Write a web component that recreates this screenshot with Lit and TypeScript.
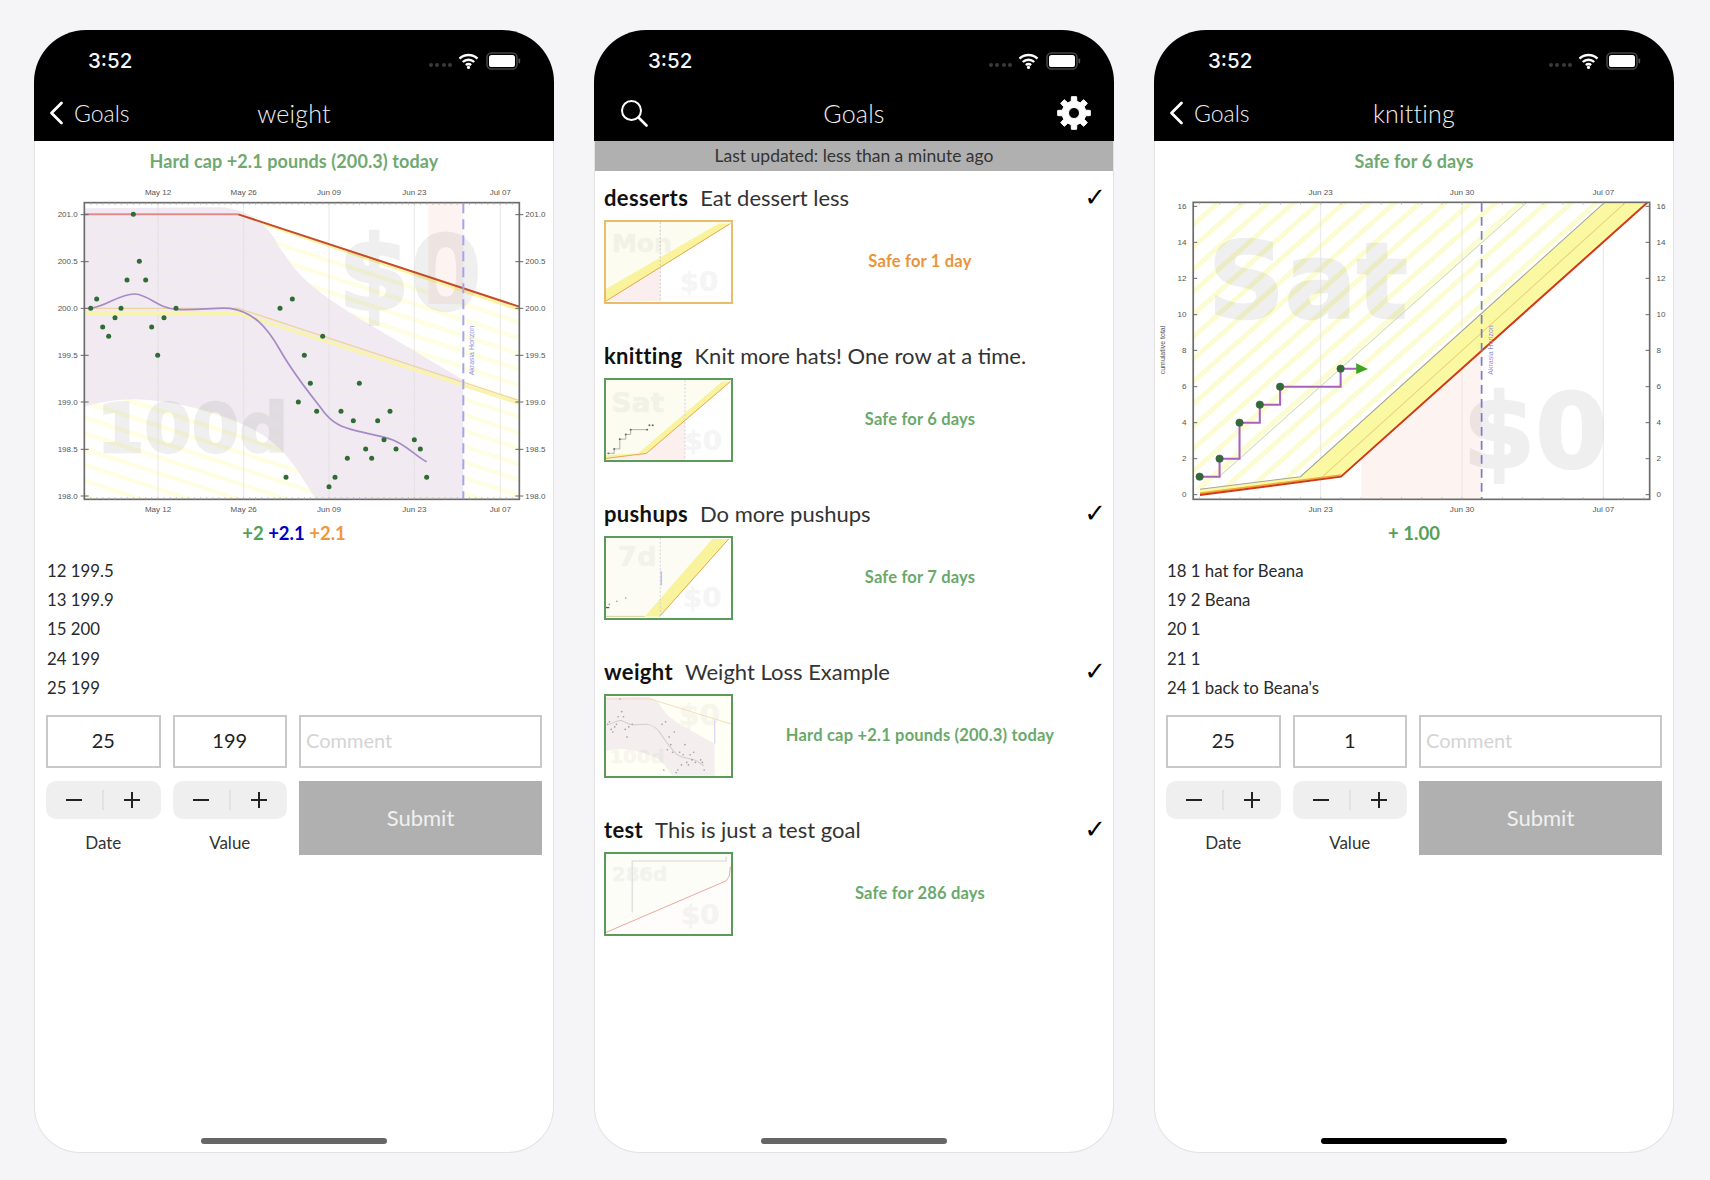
import { LitElement, html, svg, css } from "lit";
import { customElement } from "lit/decorators.js";

const pts1: [number, number][] = [[152,385],[170,357],[188,441],[206,469],[225,413],[243,385],[261,300],[280,103],[298,244],[317,300],[335,441],[353,526],[372,413],[408,385],[720,385],[738,892],[757,357],[775,666],[793,526],[811,610],[830,694],[848,469],[867,920],[885,892],[903,694],[922,835],[940,722],[958,610],[977,807],[995,835],[1013,722],[1032,779],[1050,694],[1068,807],[1123,779],[1141,807],[1160,892]];
const purple1 = "M150,385 C200,380 240,340 285,342 C330,345 350,385 410,388 C470,392 520,382 570,385 C640,395 680,440 720,510 C760,580 800,630 840,680 C880,740 920,745 960,755 C1020,770 1040,770 1070,785 C1110,805 1130,830 1160,845";
const pinkRegion1 = "M135,85 L540,82 C600,85 660,110 700,170 C740,240 780,290 820,320 C880,370 950,410 1000,440 L1270,600 L1270,955 L825,955 C780,880 740,810 660,760 C560,700 400,660 280,658 C220,658 170,670 135,680 Z";

function gearPath(cx: number, cy: number, ro: number, ri: number, hole: number, teeth = 8) {
  let d = "";
  const step = (Math.PI * 2) / teeth;
  for (let i = 0; i < teeth; i++) {
    const a = i * step - Math.PI / 2;
    const w = step * 0.2;
    const p = (r: number, t: number) => `${(cx + r * Math.cos(t)).toFixed(2)},${(cy + r * Math.sin(t)).toFixed(2)}`;
    d += `${i === 0 ? "M" : "L"}${p(ri, a - step * 0.3)} L${p(ro, a - w)} L${p(ro, a + w)} L${p(ri, a + step * 0.3)} `;
  }
  d += "Z ";
  d += `M${cx + hole},${cy} A${hole},${hole} 0 1 0 ${cx - hole},${cy} A${hole},${hole} 0 1 0 ${cx + hole},${cy} Z`;
  return d;
}

function range(from: number, to: number, step: number) {
  const a: number[] = [];
  for (let v = from; v <= to; v += step) a.push(v);
  return a;
}

function chartWeight() {
  const xt: [number, string][] = [[354,"May 12"],[611,"May 26"],[867,"Jun 09"],[1123,"Jun 23"],[1381,"Jul 07"]];
  const yt: [number, string][] = [[104,"201.0"],[245,"200.5"],[385,"200.0"],[526,"199.5"],[666,"199.0"],[808,"198.5"],[948,"198.0"]];
  return html`<svg class="chart" viewBox="-15 -18 1554 1038" preserveAspectRatio="none">
    <defs>
      <pattern id="s1" width="60" height="45" patternUnits="userSpaceOnUse" patternTransform="rotate(18)">
        <rect width="60" height="13" fill="#fefee2"></rect>
      </pattern>
    </defs>
    <rect x="133" y="68" width="1305" height="890" fill="#fff"></rect>
    <polygon points="135,103 595,103 1438,380 1438,956 135,956" fill="url(#s1)"></polygon>
    <rect x="1165" y="72" width="105" height="300" fill="#fdf3f0"></rect>
    <polygon points="595,103 1438,380 1438,394 595,110" fill="#faf5a6"></polygon>
    <path d="${pinkRegion1}" fill="#efe6f0" fill-opacity="0.85"></path>
    <text class="wm" x="895" y="390" font-size="309">$0</text>
    <text class="wm" x="170" y="815" font-size="205">100d</text>
    ${xt.map(([x]) => svg`<line x1=${x} x2=${x} y1="68" y2="958" stroke="#dcdcdc" stroke-width="2"></line>`)}
    <polyline points="135,400 595,400 1438,670" fill="none" stroke="#f8f4b0" stroke-width="10"></polyline>
    <polyline points="135,385 595,385 1438,662" fill="none" stroke="#eed49c" stroke-width="4"></polyline>
    <polyline points="135,103 595,103" fill="none" stroke="#e58a8a" stroke-width="6"></polyline>
    <polyline points="595,103 1438,380" fill="none" stroke="#c64a2c" stroke-width="6"></polyline>
    <path d="${purple1}" fill="none" stroke="#a58ac6" stroke-width="5"></path>
    <line x1="1270" x2="1270" y1="70" y2="956" stroke="#a4a4ee" stroke-width="6" stroke-dasharray="30 18"></line>
    <text class="hz" transform="translate(1302,512) rotate(-90)" font-size="21" text-anchor="middle" fill="#8f8fe6">Akrasia Horizon</text>
    ${pts1.map(([x, y]) => svg`<circle cx=${x} cy=${y} r="7.5" fill="#2f6b35"></circle>`)}
    <rect x="133" y="68" width="1305" height="890" fill="none" stroke="#6c6c6c" stroke-width="5"></rect>
    ${range(152, 1430, 18.33).map((x) => svg`<line x1=${x} x2=${x} y1="68" y2="75" stroke="#aaa" stroke-width="2"></line><line x1=${x} x2=${x} y1="951" y2="958" stroke="#aaa" stroke-width="2"></line>`)}
    ${xt.map(([x, l]) => svg`<text class="tk" x=${x} y="45" text-anchor="middle">${l}</text><text class="tk" x=${x} y="995" text-anchor="middle">${l}</text>`)}
    ${yt.map(([y, l]) => svg`<line x1="122" x2="146" y1=${y} y2=${y} stroke="#666" stroke-width="3"></line><line x1="1426" x2="1450" y1=${y} y2=${y} stroke="#666" stroke-width="3"></line><text class="tk" x="113" y=${y + 8} text-anchor="end">${l}</text><text class="tk" x="1456" y=${y + 8}>${l}</text>`)}
  </svg>`;
}

function chartKnit() {
  const xt: [number, string][] = [[505,"Jun 23"],[923,"Jun 30"],[1341,"Jul 07"]];
  const yv = [0,2,4,6,8,10,12,14,16];
  const yy = [974,866,758,650,541,434,325,217,109];
  const steps = [[147,920],[206,866],[265,758],[325,704],[385,650],[564,596]];
  return html`<svg class="chart" viewBox="15 12 1532 1038" preserveAspectRatio="none">
    <defs>
      <pattern id="s3" width="60" height="50" patternUnits="userSpaceOnUse" patternTransform="rotate(-42)">
        <rect width="60" height="15" fill="#fcfcd2"></rect>
      </pattern>
      <clipPath id="c3"><rect x="130" y="99" width="1346" height="887"></rect></clipPath>
    </defs>
    <rect x="128" y="97" width="1350" height="891" fill="#fff"></rect>
    <polygon points="130,99 1345,97 445,920 148,958 130,958" fill="url(#s3)"></polygon>
    <polygon points="625,986 625,865 981,540 981,986" fill="#fdf3f1"></polygon>
    <text class="wm" x="172" y="445" font-size="315">Sat</text>
    <text class="wm" x="925" y="895" font-size="309">$0</text>
    ${xt.map(([x]) => svg`<line x1=${x} x2=${x} y1="97" y2="988" stroke="#dcdcdc" stroke-width="2"></line>`)}
    <g clip-path="url(#c3)">
      <polyline points="205,920 1115,97" fill="none" stroke="#cfdcae" stroke-width="3"></polyline>
      <polygon points="148,958 445,920 1345,97 1472,97 565,920 148,975" fill="#fbf8a2"></polygon>
      <polyline points="148,958 445,920 1345,97" fill="none" stroke="#a4a498" stroke-width="3"></polyline>
      <polyline points="148,968 505,925 1405,99" fill="none" stroke="#e8d078" stroke-width="3"></polyline>
      <polyline points="148,970 565,915" fill="none" stroke="#f2a83a" stroke-width="5"></polyline>
      <polyline points="148,975 565,920 1472,97" fill="none" stroke="#cf3a1a" stroke-width="6"></polyline>
    </g>
    <line x1="981" x2="981" y1="99" y2="986" stroke="#7a7acc" stroke-width="5" stroke-dasharray="26 16"></line>
    <text class="hz" transform="translate(1014,540) rotate(-90)" font-size="21" text-anchor="middle" fill="#8f8fe6">Akrasia Horizon</text>
    <polyline points="147,920 206,920 206,866 265,866 265,758 325,758 325,704 385,704 385,650 564,650 564,596 612,596" fill="none" stroke="#a862bc" stroke-width="6"></polyline>
    <polygon points="610,580 645,597 610,612" fill="#3ea524"></polygon>
    ${steps.map(([x, y]) => svg`<circle cx=${x} cy=${y} r="11" fill="#2f6b35" stroke="#555" stroke-width="2"></circle>`)}
    <rect x="128" y="97" width="1350" height="891" fill="none" stroke="#6c6c6c" stroke-width="5"></rect>
    ${range(147, 1470, 59.7).map((x) => svg`<line x1=${x} x2=${x} y1="97" y2="104" stroke="#aaa" stroke-width="2"></line><line x1=${x} x2=${x} y1="981" y2="988" stroke="#aaa" stroke-width="2"></line>`)}
    ${xt.map(([x, l]) => svg`<text class="tk" x=${x} y="75" text-anchor="middle">${l}</text><text class="tk" x=${x} y="1025" text-anchor="middle">${l}</text>`)}
    ${yv.map((v, i) => svg`<line x1="128" x2="140" y1=${yy[i]} y2=${yy[i]} stroke="#666" stroke-width="3"></line><line x1="1466" x2="1478" y1=${yy[i]} y2=${yy[i]} stroke="#666" stroke-width="3"></line><text class="tk" x="108" y=${yy[i] + 8} text-anchor="end">${v}</text><text class="tk" x="1498" y=${yy[i] + 8}>${v}</text>`)}
    <text class="tk" transform="translate(46,540) rotate(-90)" text-anchor="middle" style="font-size:21px">cumulative total</text>
  </svg>`;
}

const thumbs: Record<string, unknown> = {
  desserts: svg`
    <rect width="380" height="253" fill="#fcfcf0"></rect>
    <polygon points="165,253 165,145 380,5 380,253" fill="#fff"></polygon>
    <polygon points="0,250 165,145 165,250" fill="#fbeeee"></polygon>
    <text class="wm thin" x="18" y="96" font-size="76">Mon</text>
    <text class="wm thin" x="224" y="218" font-size="84">$0</text>
    <polygon points="0,212 343,5 378,5 0,250" fill="#f8f39c"></polygon>
    <polyline points="0,250 378,5" fill="none" stroke="#e8a24a" stroke-width="3"></polyline>
    <line x1="165" x2="165" y1="0" y2="253" stroke="#c8c8d0" stroke-width="3" stroke-dasharray="6 6"></line>`,
  knitting: svg`
    <rect width="380" height="253" fill="#fcfcf0"></rect>
    <polygon points="123,232 378,5 380,253 123,253" fill="#fff"></polygon>
    <polygon points="123,232 240,122 240,253 0,253 0,245" fill="#fcf0ee"></polygon>
    <text class="wm thin" x="16" y="100" font-size="86">Sat</text>
    <text class="wm thin" x="236" y="220" font-size="84">$0</text>
    <polygon points="0,238 98,232 353,5 378,5 123,232 0,248" fill="#f8f39c"></polygon>
    <polyline points="0,248 123,232 378,5" fill="none" stroke="#e8a24a" stroke-width="3"></polyline>
    <line x1="240" x2="240" y1="0" y2="253" stroke="#d0d0da" stroke-width="3" stroke-dasharray="6 6"></line>
    <polyline points="7,232 25,232 25,218 42,218 42,187 60,187 60,172 75,172 75,157 125,157" fill="none" stroke="#888" stroke-width="2"></polyline>
    ${[[7,232],[25,218],[42,187],[60,172],[75,157],[125,157],[132,143],[142,143]].map(([x, y]) => svg`<circle cx=${x} cy=${y} r="3" fill="#666"></circle>`)}`,
  pushups: svg`
    <rect width="380" height="253" fill="#fcfcf4"></rect>
    <polygon points="163,248 373,3 380,253" fill="#fff"></polygon>
    <text class="wm thin" x="36" y="90" font-size="84">7d</text>
    <text class="wm thin" x="234" y="218" font-size="84">$0</text>
    <polygon points="118,248 323,3 373,3 163,248" fill="#f8f39c"></polygon>
    <polyline points="163,248 373,3" fill="none" stroke="#e8a24a" stroke-width="3"></polyline>
    <polyline points="0,248 118,248" fill="none" stroke="#cfcf9c" stroke-width="3"></polyline>
    <line x1="165" x2="165" y1="0" y2="253" stroke="#d0d0da" stroke-width="3" stroke-dasharray="6 6"></line>
    <line x1="168" x2="168" y1="105" y2="150" stroke="#c0c0ee" stroke-width="5"></line>
    <line x1="0" x2="10" y1="220" y2="220" stroke="#555" stroke-width="4"></line>
    ${[[10,210],[33,200],[60,190]].map(([x, y]) => svg`<circle cx=${x} cy=${y} r="2.5" fill="#999"></circle>`)}`,
  weight: svg`
    <rect width="380" height="253" fill="#fffff6"></rect>
    <g transform="translate(-39,-20) scale(0.291,0.285)" opacity="0.55">
      <path d="${pinkRegion1}" fill="#ece2e8"></path>
      <text class="wm" x="895" y="390" font-size="309">$0</text>
      <text class="wm" x="170" y="815" font-size="205">100d</text>
      <polyline points="595,103 1438,380" fill="none" stroke="#e8b870" stroke-width="9"></polyline>
      <polyline points="135,103 595,103" fill="none" stroke="#e8a8a0" stroke-width="9"></polyline>
      <path d="${purple1}" fill="none" stroke="#b8a0a0" stroke-width="11"></path>
      <line x1="1270" x2="1270" y1="340" y2="600" stroke="#a8b0ee" stroke-width="11"></line>
      ${pts1.map(([x, y]) => svg`<circle cx=${x} cy=${y} r="9" fill="#555"></circle>`)}
    </g>`,
  test: svg`
    <rect width="380" height="253" fill="#fdfdf8"></rect>
    <polygon points="0,250 365,85 378,40 380,253" fill="#fffcfc"></polygon>
    <text class="wm thin" x="18" y="86" font-size="60">286d</text>
    <text class="wm thin" x="228" y="220" font-size="84">$0</text>
    <polyline points="80,185 80,22 365,22 365,8" fill="none" stroke="#e2e2e2" stroke-width="5"></polyline>
    <polyline points="0,248 365,85 375,70 378,40" fill="none" stroke="#e8a4a0" stroke-width="3"></polyline>`,
};

const goals = [
  { slug: "desserts", desc: "Eat dessert less", status: "Safe for 1 day", color: "orange", check: true },
  { slug: "knitting", desc: "Knit more hats! One row at a time.", status: "Safe for 6 days", color: "green", check: false },
  { slug: "pushups", desc: "Do more pushups", status: "Safe for 7 days", color: "green", check: true },
  { slug: "weight", desc: "Weight Loss Example", status: "Hard cap +2.1 pounds (200.3) today", color: "green", check: true },
  { slug: "test", desc: "This is just a test goal", status: "Safe for 286 days", color: "green", check: true },
];

@customElement("app-root")
export class AppRoot extends LitElement {
  static styles = css`
    :host { display: flex; width: 1710px; height: 1180px; box-sizing: border-box; padding: 30px 36px 27px 34px; gap: 40px; background: #f5f5f7; font-family: Lato, "Open Sans", sans-serif; color: #222; }
    * { box-sizing: border-box; }
    .phone { width: 520px; display: flex; flex-direction: column; }
    .top { background: #000; color: #fff; border-radius: 52px 52px 0 0; height: 110.5px; display: flex; flex-direction: column; flex: none; }
    .sbar { height: 56px; flex: none; display: flex; align-items: center; justify-content: space-between; padding: 5px 33px 0 54px; }
    .time { font: 500 20.5px Inter, sans-serif; color: #f4f4f4; }
    .sicons { display: flex; align-items: center; gap: 7px; }
    .dots { display: flex; gap: 2.5px; margin-top: 9px; margin-right: -1px; }
    .dots i { width: 4px; height: 4px; border-radius: 50%; background: #3a3a3a; }
    .nav { flex: 1; display: grid; grid-template-columns: 1fr auto 1fr; align-items: center; padding: 0 14px; font-size: 23px; font-weight: 300; color: #efefef; }
    .nav .left { display: flex; align-items: center; gap: 10px; }
    .nav .right { display: flex; justify-content: flex-end; }
    .nav .t { font-size: 25px; font-weight: 300; letter-spacing: 0.2px; }
    .gear { margin-right: 9px; }
    .search { margin-left: 12px; }
    .body { flex: 1; background: #fff; border: 1px solid #e2e2e4; border-top: none; border-radius: 0 0 46px 46px; display: flex; flex-direction: column; position: relative; }
    .banner { text-align: center; font-size: 18px; font-weight: 700; line-height: 20px; padding: 10px 0 3.5px; color: #6fa96f; height: 33.5px; letter-spacing: 0.1px; }
    .chart { display: block; width: 518px; height: 346px; flex: none; }
    .wm { font-family: "DejaVu Sans", sans-serif; font-weight: 700; fill: #000; stroke: #000; stroke-width: 7px; opacity: 0.06; }
    .wm.thin { stroke-width: 2px; opacity: 0.035; }
    .tk { font-family: "Liberation Sans", sans-serif; font-size: 24px; fill: #555; }
    .hz { font-family: "Liberation Sans", sans-serif; }
    .delta { height: 26px; line-height: 26px; text-align: center; font-size: 18.5px; font-weight: 700; }
    .g { color: #55a055; } .b { color: #0000c8; } .o { color: #f0963c; }
    .list { padding: 10px 11px 0 12px; height: 169px; }
    .list div { height: 29.2px; line-height: 29.2px; font-size: 16.8px; color: #2a2a2a; }
    .form { display: grid; grid-template-columns: 114.5px 114.5px 1fr; gap: 13px 12px; padding: 0 11px; }
    .box { height: 53px; border: 2px solid #c9c9c9; display: flex; align-items: center; justify-content: center; font-size: 20px; color: #222; padding-bottom: 3px; }
    .box.c { justify-content: flex-start; padding-left: 5px; color: #d4d4d4; }
    .stepcol { display: flex; flex-direction: column; height: 74px; }
    .stepper { height: 38px; background: #efefef; border-radius: 10px; display: flex; align-items: center; }
    .stepper span { flex: 1; display: flex; justify-content: center; }
    .stepper b { width: 2px; height: 20px; background: #e2e2e2; }
    .lab { height: 24px; margin-top: 12px; line-height: 24px; text-align: center; font-size: 17px; color: #333; }
    .submit { height: 74px; background: #b0b0b0; color: #f0f0f0; font-size: 22px; display: flex; align-items: center; justify-content: center; padding-bottom: 2px; }
    .home { margin-top: auto; margin-bottom: 8px; align-self: center; width: 186px; height: 6px; border-radius: 3px; background: #666; }
    .home.dark { background: #000; }
    .updated { height: 30.5px; background: #b0b0b0; text-align: center; line-height: 30.5px; font-size: 17.5px; color: #333; flex: none; }
    .goal { padding: 11px 6px 26px 9px; height: 158px; flex: none; }
    .gh { display: flex; align-items: center; height: 30px; font-size: 22px; color: #333; gap: 12px; }
    .gh strong { color: #111; font-weight: 700; letter-spacing: 0.35px; }
    .gh .ck { margin-left: auto; margin-right: 1px; font: 26px "DejaVu Sans", sans-serif; color: #000; }
    .gb { display: flex; align-items: center; margin-top: 8px; }
    .thumb { width: 129px; height: 84px; border: 2px solid #5a9a5a; flex: none; display: block; }
    .thumb.orange { border-color: #eabb68; }
    .st { flex: 1; text-align: center; font-size: 16.5px; font-weight: 700; letter-spacing: 0.2px; padding-bottom: 2px; }
    .st.green { color: #6aa96a; } .st.orange { color: #e8943a; }
  `;

  private statusBar() {
    return html`<div class="sbar">
      <span class="time">3:52</span>
      <span class="sicons">
        <span class="dots"><i></i><i></i><i></i><i></i></span>
        <svg width="21" height="16" viewBox="0 0 21 16"><path d="M1.5 5.6a13 13 0 0 1 18 0M4.8 9a8.2 8.2 0 0 1 11.4 0M7.9 12.1a3.8 3.8 0 0 1 5.2 0" fill="none" stroke="#fff" stroke-width="2.4"></path><circle cx="10.5" cy="14.4" r="1.6" fill="#fff"></circle></svg>
        <svg width="35" height="18" viewBox="0 0 35 18"><rect x="1" y="1" width="30" height="16" rx="4.5" fill="#000" stroke="#444" stroke-width="1.6"></rect><rect x="3" y="3" width="26" height="12" rx="2.6" fill="#fff"></rect><rect x="32.5" y="6.5" width="1.6" height="5" rx="0.8" fill="#555"></rect></svg>
      </span>
    </div>`;
  }

  private chevron() {
    return html`<svg width="16" height="24" viewBox="0 0 16 24"><path d="M13.5 2 L3.5 12 L13.5 22" fill="none" stroke="#fff" stroke-width="2.8" stroke-linecap="round" stroke-linejoin="round"></path></svg>`;
  }

  private minus() {
    return html`<svg width="18" height="18" viewBox="0 0 18 18"><line x1="1" x2="17" y1="9" y2="9" stroke="#222" stroke-width="2"></line></svg>`;
  }
  private plus() {
    return html`<svg width="18" height="18" viewBox="0 0 18 18"><path d="M1 9H17M9 1V17" stroke="#222" stroke-width="2" fill="none"></path></svg>`;
  }

  private stepcol(label: string) {
    return html`<div class="stepcol">
      <div class="stepper"><span>${this.minus()}</span><b></b><span>${this.plus()}</span></div>
      <div class="lab">${label}</div>
    </div>`;
  }

  private detail(title: string, banner: string, chart: unknown, delta: unknown, rows: string[], value: string, dark: boolean) {
    return html`<div class="phone">
      <div class="top">
        ${this.statusBar()}
        <div class="nav">
          <div class="left">${this.chevron()}<span>Goals</span></div>
          <div class="t">${title}</div>
          <div class="right"></div>
        </div>
      </div>
      <div class="body">
        <div class="banner">${banner}</div>
        ${chart}
        <div class="delta">${delta}</div>
        <div class="list">${rows.map((r) => html`<div>${r}</div>`)}</div>
        <div class="form">
          <div class="box">25</div>
          <div class="box">${value}</div>
          <div class="box c">Comment</div>
          ${this.stepcol("Date")}
          ${this.stepcol("Value")}
          <div class="submit">Submit</div>
        </div>
        <div class="home ${dark ? "dark" : ""}"></div>
      </div>
    </div>`;
  }

  private list() {
    return html`<div class="phone">
      <div class="top">
        ${this.statusBar()}
        <div class="nav">
          <div class="left">
            <svg class="search" width="28" height="28" viewBox="0 0 28 28"><circle cx="11.5" cy="11.5" r="9.5" fill="none" stroke="#fff" stroke-width="2"></circle><line x1="18.5" y1="18.5" x2="26.5" y2="26.5" stroke="#fff" stroke-width="2.6" stroke-linecap="round"></line></svg>
          </div>
          <div class="t">Goals</div>
          <div class="right">
            <svg class="gear" width="34" height="34" viewBox="0 0 34 34"><path d="${gearPath(17, 17, 16.5, 12, 5.5)}" fill="#fff" fill-rule="evenodd" stroke="#fff" stroke-width="1" stroke-linejoin="round"></path></svg>
          </div>
        </div>
      </div>
      <div class="body">
        <div class="updated">Last updated: less than a minute ago</div>
        ${goals.map((g) => html`<div class="goal">
          <div class="gh"><strong>${g.slug}</strong><span>${g.desc}</span>${g.check ? html`<span class="ck">✓</span>` : ""}</div>
          <div class="gb">
            <svg class="thumb ${g.color}" viewBox="0 0 380 253" preserveAspectRatio="none">${thumbs[g.slug]}</svg>
            <div class="st ${g.color}">${g.status}</div>
          </div>
        </div>`)}
        <div class="home"></div>
      </div>
    </div>`;
  }

  render() {
    return html`
      ${this.detail("weight", "Hard cap +2.1 pounds (200.3) today", chartWeight(),
        html`<span class="g">+2</span> <span class="b">+2.1</span> <span class="o">+2.1</span>`,
        ["12 199.5", "13 199.9", "15 200", "24 199", "25 199"], "199", false)}
      ${this.list()}
      ${this.detail("knitting", "Safe for 6 days", chartKnit(),
        html`<span class="g">+ 1.00</span>`,
        ["18 1 hat for Beana", "19 2 Beana", "20 1", "21 1", "24 1 back to Beana's"], "1", true)}
    `;
  }
}
